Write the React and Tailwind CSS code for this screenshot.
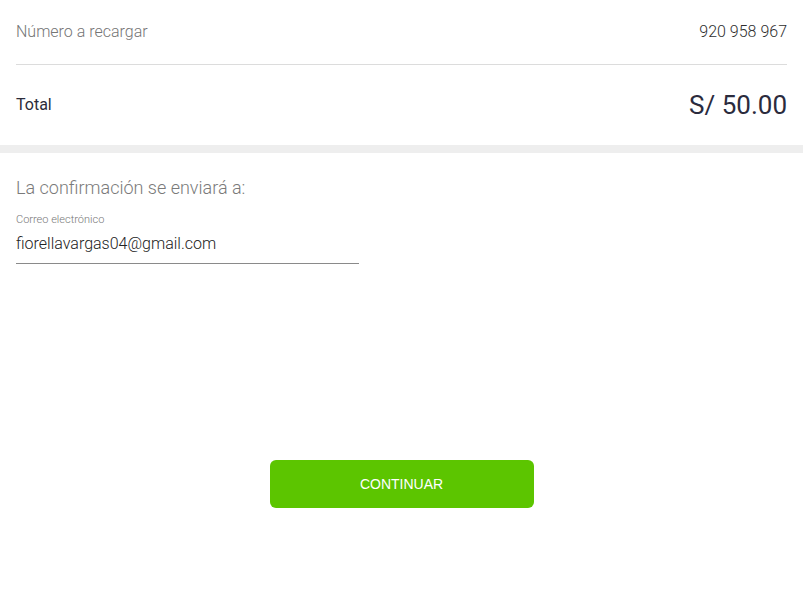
import React from "react";

export default function App() {
  return (
    <div className="min-h-screen w-full bg-white font-['Roboto',sans-serif]">
      {/* Resumen */}
      <div className="px-4">
        <div className="flex h-[65px] items-center justify-between border-b border-[#dcdcdc]">
          <span className="text-[16px] font-light text-[#757575]">Número a recargar</span>
          <span className="text-[16px] font-light text-[#2e2e2e]">920 958 967</span>
        </div>
        <div className="flex h-[80px] items-center justify-between">
          <span className="text-[16px] font-normal text-[#2b2b3a]">Total</span>
          <span className="text-[26px] text-[#2b2b3d]">S/ 50.00</span>
        </div>
      </div>

      <div className="h-2 bg-[#eeeeee]"></div>

      {/* Confirmación */}
      <div className="px-4 pt-[23px]">
        <p className="text-[18px] font-light leading-6 text-[#7a7a7a]">La confirmación se enviará a:</p>
        <div className="mt-[13px] w-[343px] border-b border-[#8a8a8a]">
          <label className="block text-[11px] font-light leading-[13px] text-[#777]">Correo electrónico</label>
          <div className="pb-[9px] pt-[8px] text-[16px] font-light leading-[20px] text-[#222]">fiorellavargas04@gmail.com</div>
        </div>
      </div>

      <div className="mt-[196px] flex justify-center">
        <button className="h-12 w-[264px] rounded-md bg-[#5cc500] font-['Liberation_Sans',sans-serif] text-[14px] text-white">
          CONTINUAR
        </button>
      </div>
    </div>
  );
}
